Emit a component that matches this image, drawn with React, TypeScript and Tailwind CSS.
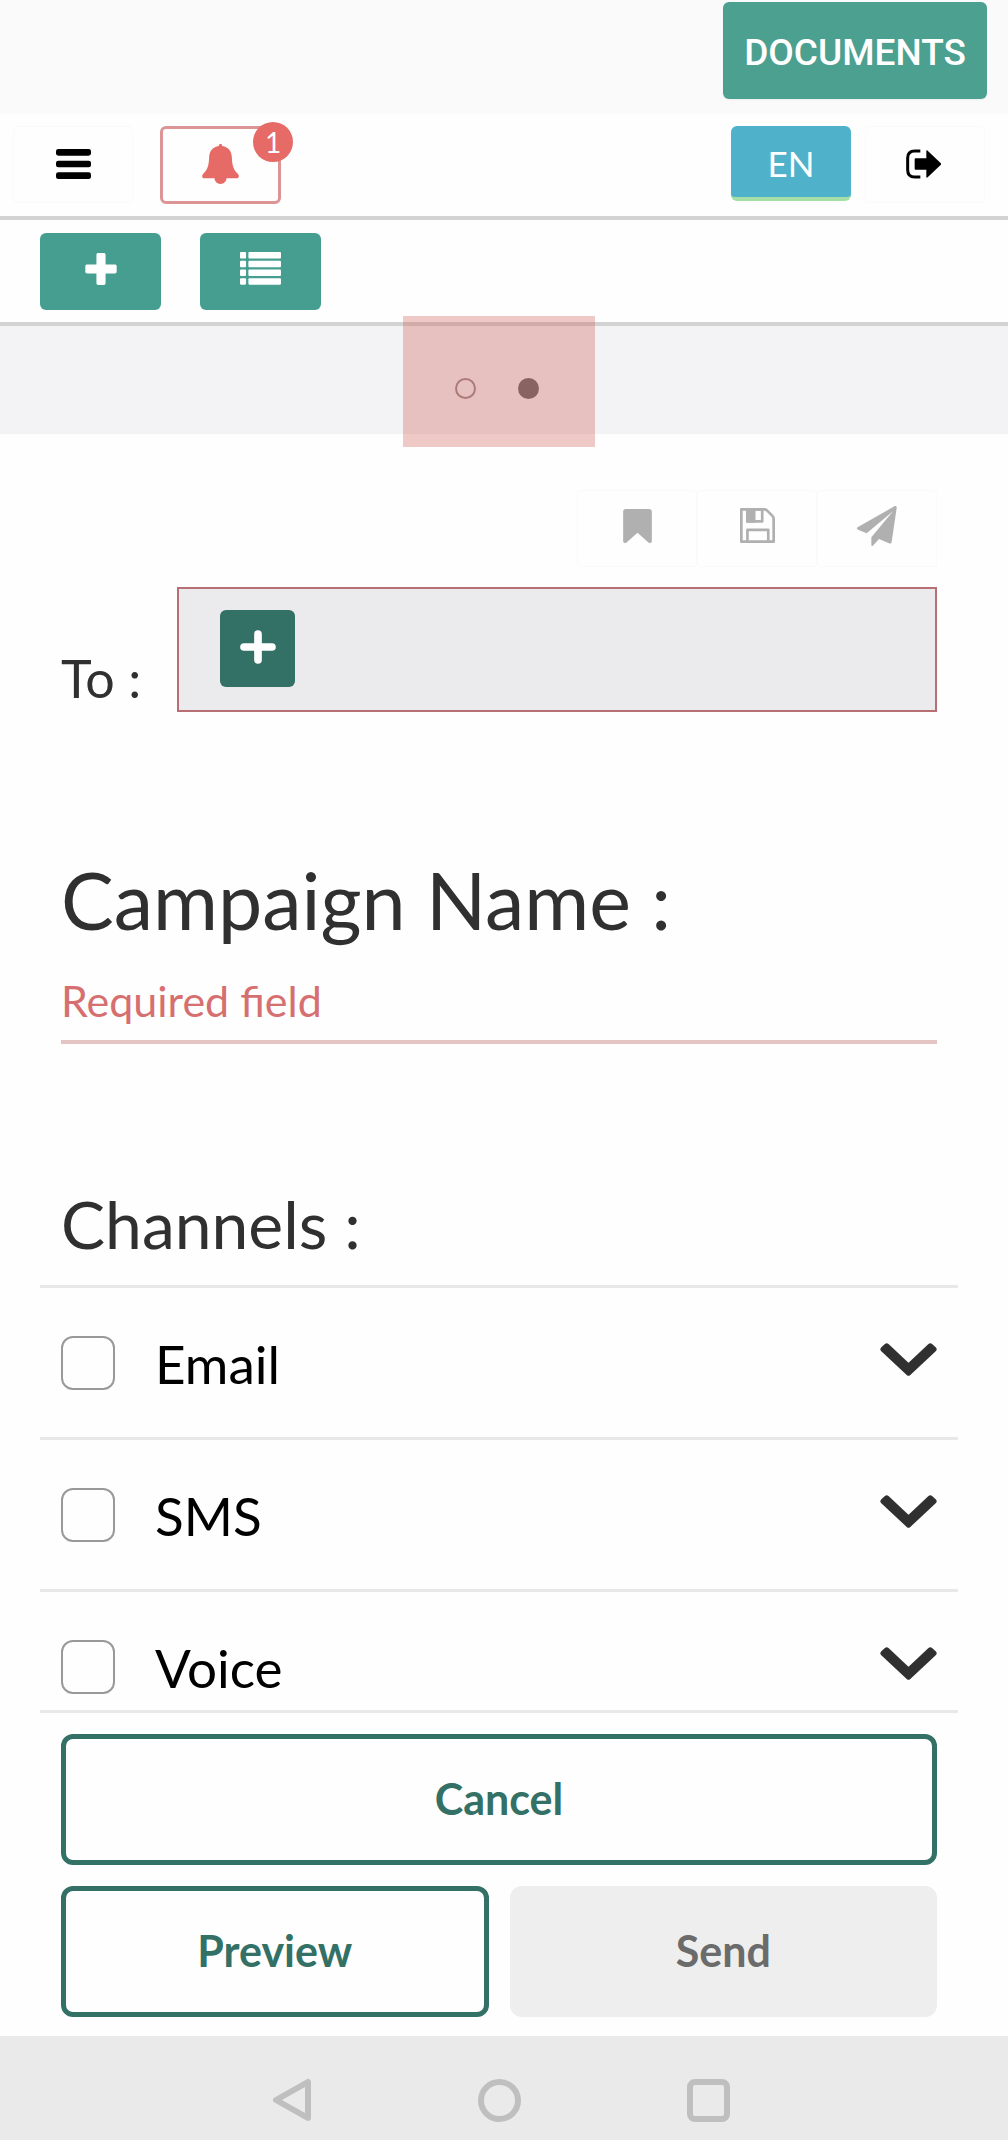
import React from "react";

function MenuIcon() {
  return (
    <svg viewBox="0 0 105 90" className="h-[30px] w-[35px]" fill="currentColor" aria-hidden="true">
      <rect x="0" y="0" width="105" height="20" rx="7" />
      <rect x="0" y="35" width="105" height="20" rx="7" />
      <rect x="0" y="70" width="105" height="20" rx="7" />
    </svg>
  );
}

function BellIcon() {
  return (
    <svg viewBox="0 0 110 120" className="h-10 w-[37px]" fill="currentColor" aria-hidden="true">
      <path d="M55 0c3 0 5 2 5 5v1c18 3 28 14 29 33c1 27 5 38 19 52c4 5 2 12-5 12H73c0 9-8 17-18 17s-18-8-18-17H7c-7 0-9-7-5-12c14-14 18-25 19-52C22 20 32 9 50 6V5c0-3 2-5 5-5z" />
    </svg>
  );
}

function SignOutIcon() {
  return (
    <svg viewBox="0 0 105 88" className="h-[30px] w-[35px]" aria-hidden="true">
      <path d="M43 5H26C12 5 5 13 5 26v36c0 13 7 21 21 21h17" fill="none" stroke="currentColor" strokeWidth="9" />
      <path d="M29 27h32V5c0-3 2-3 4-1l38 36c3 3 3 5 0 8L65 84c-2 2-4 2-4-1V61H29c-2 0-3-1-3-3V30c0-2 1-3 3-3z" fill="currentColor" />
    </svg>
  );
}

function PlusIcon() {
  return (
    <svg viewBox="0 0 96 98" className="size-8" fill="currentColor" aria-hidden="true">
      <path d="M40 0h16c4 0 6 2 6 6v29h28c4 0 6 2 6 6v16c0 4-2 6-6 6H62v29c0 4-2 6-6 6H40c-4 0-6-2-6-6V63H6c-4 0-6-2-6-6V41c0-4 2-6 6-6h28V6c0-4 2-6 6-6z" />
    </svg>
  );
}

function RoundPlusIcon() {
  return (
    <svg viewBox="0 0 108 102" className="h-[34px] w-9" fill="none" stroke="currentColor" strokeWidth="23" strokeLinecap="round" aria-hidden="true">
      <path d="M54 12v78M12 51h84" />
    </svg>
  );
}

function ListIcon() {
  return (
    <svg viewBox="0 0 122 98" className="h-[33px] w-[41px]" fill="currentColor" aria-hidden="true">
      {[0, 26, 52, 78].map((y) => (
        <g key={y}>
          <rect x="0" y={y} width="18" height="19" rx="3" />
          <rect x="25" y={y} width="97" height="19" rx="3" />
        </g>
      ))}
    </svg>
  );
}

function BookmarkIcon() {
  return (
    <svg viewBox="0 0 86 102" className="h-[34px] w-[29px]" fill="currentColor" aria-hidden="true">
      <path d="M8 0h70c5 0 8 3 8 8v88c0 6-6 8-11 4L43 71L11 100c-5 4-11 2-11-4V8c0-5 3-8 8-8z" />
    </svg>
  );
}

function SaveIcon() {
  return (
    <svg viewBox="0 0 104 104" className="size-[35px]" fill="none" stroke="currentColor" strokeWidth="8" strokeLinejoin="round" aria-hidden="true">
      <path d="M4 4h68c3 0 6 1 8 3l17 17c2 2 3 5 3 8v68H4z" />
      <path d="M22 4h44v36H22z" />
      <path d="M22 4h20v36H22z" fill="currentColor" />
      <path d="M22 100V65h62v35" />
    </svg>
  );
}

function PlaneIcon() {
  return (
    <svg viewBox="0 0 120 120" className="size-10" fill="currentColor" aria-hidden="true">
      <path d="M112 1c4-2 8 1 7 5l-15 102c-1 4-4 6-8 4L66 99l-17 19c-3 3-6 2-6-2V94L108 16L29 82L3 71c-4-2-4-6 0-8z" />
    </svg>
  );
}

function ChevronIcon() {
  return (
    <svg viewBox="0 0 170 100" className="h-[33px] w-[57px]" fill="currentColor" stroke="currentColor" strokeWidth="16" strokeLinejoin="round" aria-hidden="true">
      <path d="M19 9L85 71L151 9L162 19L85 91L8 19z" />
    </svg>
  );
}

const faint = "flex h-[77px] w-[120px] items-center justify-center rounded border border-[#fafafa]";

function Channel({ name, last = false }: { name: string; last?: boolean }) {
  const id = name.toLowerCase();
  return (
    <li className={`flex items-center border-t-[3px] border-[#e8e8e8] px-[21px] pt-12 ${last ? "border-b-[3px] pb-4" : "pb-[47px]"}`}>
      <input id={id} type="checkbox" className="size-[54px] appearance-none rounded-xl border-2 border-[#999] checked:bg-[#337066]" />
      <label htmlFor={id} className="ml-10 flex h-[54px] flex-1 items-center text-[53px] leading-none text-black">
        {name}
      </label>
      <button type="button" aria-label={`Expand ${name}`} className="pb-2 text-[#303030]">
        <ChevronIcon />
      </button>
    </li>
  );
}

export default function App() {
  return (
    <div className="flex min-h-screen flex-col bg-[#fefefe] font-['Lato',sans-serif] text-[#303030]">
      <div className="flex h-[114px] justify-end bg-[#fafafa] pt-[2px] pr-[21px]">
        <button type="button" className="h-[97px] w-[264px] rounded-md bg-[#4ca090] pt-1 font-['Roboto',sans-serif] text-[37px] font-medium text-white shadow-xs">
          DOCUMENTS
        </button>
      </div>

      <header className="flex h-[106px] items-start justify-between border-b-4 border-[#d3d3d3] pt-3 pr-[23px] pl-[13px]">
        <div className="flex gap-[27px]">
          <button type="button" aria-label="Menu" className={`${faint} pb-[2px] text-black`}>
            <MenuIcon />
          </button>
          <button type="button" aria-label="Notifications" className="relative flex h-[78px] w-[121px] items-center justify-center rounded-md border-[3px] border-[#dc9494] pb-[2px] text-[#e66a65]">
            <BellIcon />
            <span className="absolute -top-[7px] -right-[15px] flex size-10 items-center justify-center rounded-full bg-[#e66a65] text-[28px] leading-none text-white">
              1
            </span>
          </button>
        </div>
        <div className="flex gap-[14px]">
          <button type="button" className="h-[75px] w-[120px] rounded-md border-b-4 border-[#a5dfa5] bg-[#50b2ca] pt-1 text-[35px] text-white">
            EN
          </button>
          <button type="button" aria-label="Sign out" className={`${faint} pr-1 pb-[2px] text-black`}>
            <SignOutIcon />
          </button>
        </div>
      </header>

      <div className="flex h-[106px] items-start gap-[39px] border-b-4 border-[#d3d3d3] pt-[13px] pl-10 text-white">
        <button type="button" aria-label="New campaign" className="flex h-[77px] w-[121px] items-center justify-center rounded-md bg-[#469e91] pb-[6px]">
          <PlusIcon />
        </button>
        <button type="button" aria-label="Campaign list" className="flex h-[77px] w-[121px] items-center justify-center rounded-md bg-[#469e91] pb-[6px]">
          <ListIcon />
        </button>
      </div>

      <div className="relative flex h-[108px] items-center justify-center gap-[42px] bg-[#f3f3f5] pt-4 pr-[15px]">
        <button type="button" aria-label="Step 1" className="size-[21px] rounded-full border-2 border-[#9f8f90]" />
        <button type="button" aria-label="Step 2" className="size-[21px] rounded-full bg-[#6c6c6c]" />
        <div className="pointer-events-none absolute -top-[10px] -bottom-[13px] left-[40%] w-[19%] bg-[#cb4f41]/30" />
      </div>

      <main className="flex-1 pr-[50px] pl-10">
        <div className="px-[21px]">
          <div className="flex justify-end pt-14 text-[#b0b0b0]">
            <button type="button" aria-label="Bookmark" className={`${faint} pb-[6px]`}>
              <BookmarkIcon />
            </button>
            <button type="button" aria-label="Save" className={`${faint} pb-[6px]`}>
              <SaveIcon />
            </button>
            <button type="button" aria-label="Send now" className={`${faint} pb-[6px]`}>
              <PlaneIcon />
            </button>
          </div>

          <div className="mt-5 flex items-end">
            <label htmlFor="to" className="w-[116px] pb-[2px] text-[52px] leading-[64px]">
              To :
            </label>
            <div className="flex h-[125px] flex-1 items-start border-2 border-[#b86f74] bg-[#ebebed] pt-[21px] pl-[41px]">
              <button type="button" aria-label="Add recipient" className="flex h-[77px] w-[75px] items-center justify-center rounded-md bg-[#337066] pb-1 text-white">
                <RoundPlusIcon />
              </button>
              <input id="to" className="h-[77px] min-w-0 flex-1 px-4 text-[43px] outline-none" />
            </div>
          </div>

          <label htmlFor="campaign" className="mt-[140px] block text-[79px] leading-[96px]">
            Campaign Name :
          </label>
          <input id="campaign" placeholder="Required field" className="mt-3 block h-[84px] w-full border-b-4 border-[#e5c4c4] text-[43px] outline-none placeholder:text-[#d66f70]" />

          <h2 className="mt-[140px] text-[66px] leading-[80px]">Channels :</h2>
        </div>

        <ul className="mt-[21px]">
          <Channel name="Email" />
          <Channel name="SMS" />
          <Channel name="Voice" last />
        </ul>

        <div className="grid grid-cols-2 gap-[21px] px-[21px] pt-[21px] text-[43px] font-bold text-[#337066]">
          <button type="button" className="col-span-2 h-[131px] rounded-xl border-[5px] border-[#337066]">
            Cancel
          </button>
          <button type="button" className="h-[131px] rounded-xl border-[5px] border-[#337066]">
            Preview
          </button>
          <button type="button" className="h-[131px] rounded-xl bg-[#eeeeee] text-[#6b6b6b]">
            Send
          </button>
        </div>
      </main>

      <nav className="flex h-[104px] items-center justify-center gap-[166px] bg-[#eaeaea] pt-6 pr-[6px] text-[#bfbfbf]">
        <button type="button" aria-label="Back">
          <svg viewBox="0 0 40 44" className="h-11 w-10" fill="none" stroke="currentColor" strokeWidth="6" strokeLinejoin="round" aria-hidden="true">
            <path d="M36 4v36L4 22z" />
          </svg>
        </button>
        <button type="button" aria-label="Home" className="size-[43px] rounded-full border-[6px] border-[#bfbfbf]" />
        <button type="button" aria-label="Recents" className="size-[43px] rounded-lg border-[6px] border-[#bfbfbf]" />
      </nav>
    </div>
  );
}
